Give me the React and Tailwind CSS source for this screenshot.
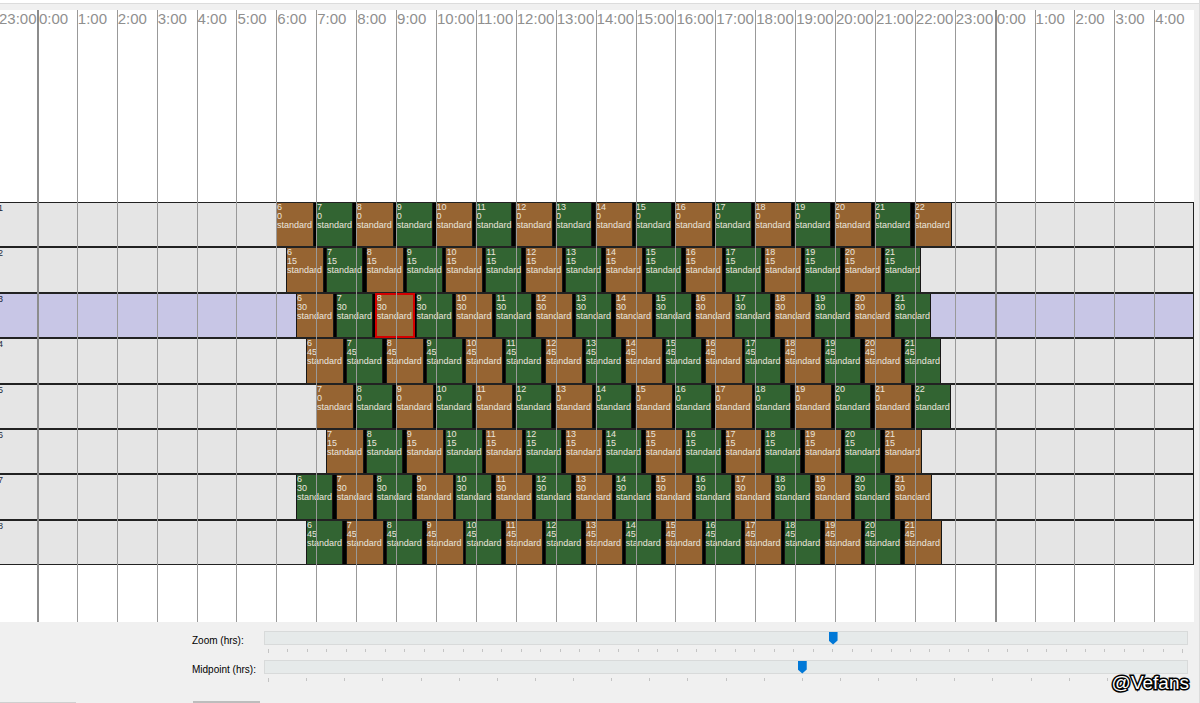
import React from 'react';
import clsx from 'clsx';

// Visible window of the timeline, in hours from midnight
const VIEW_START = -0.925;
const VIEW_END = 29;

const BLOCK_HOURS = { brown: 0.95, green: 0.925 };

const rows = [
  { id: 1, firstHour: 6, minute: 0, count: 17, firstColor: 'brown' },
  { id: 2, firstHour: 6, minute: 15, count: 16, firstColor: 'brown' },
  { id: 3, firstHour: 6, minute: 30, count: 16, firstColor: 'brown' },
  { id: 4, firstHour: 6, minute: 45, count: 16, firstColor: 'brown' },
  { id: 5, firstHour: 7, minute: 0, count: 16, firstColor: 'brown' },
  { id: 6, firstHour: 7, minute: 15, count: 15, firstColor: 'brown' },
  { id: 7, firstHour: 6, minute: 30, count: 16, firstColor: 'green' },
  { id: 8, firstHour: 6, minute: 45, count: 16, firstColor: 'green' },
];

const selected = { row: 3, hour: 8 };

const getColor = (row, index) => {
  const other = row.firstColor === 'brown' ? 'green' : 'brown';
  return index % 2 === 0 ? row.firstColor : other;
};

// Space shared out by hours; scaled up so that a lone part still fills its parent
const span = (hours) => ({ flex: `${hours * 100} 1 0` });

const Block = ({ hour, minute, color, isSelected }) => (
  <div
    className={clsx(
      'h-full min-w-0 whitespace-nowrap border-x border-[#161616] text-[9px] leading-[9px] text-[#ece6de]',
      color === 'brown' ? 'bg-[#966432]' : 'bg-[#326432]',
      isSelected && 'relative z-10 outline-2 -outline-offset-1 outline-[#d40000]'
    )}
    style={span(BLOCK_HOURS[color])}
  >
    <div>{hour}</div>
    <div>{minute}</div>
    <div>standard</div>
  </div>
);

const TimelineRow = ({ row }) => {
  const start = row.firstHour + row.minute / 60;
  const lastColor = getColor(row, row.count - 1);
  const end = start + row.count - 1 + BLOCK_HOURS[lastColor];

  return (
    <div
      className={clsx(
        'flex min-w-0 border-y border-r border-[#222222]',
        row.id === selected.row ? 'bg-[#c8c6e6]' : 'bg-[#e5e5e5]'
      )}
    >
      <div
        className="min-w-0 overflow-hidden pt-px text-[9px] leading-[9px] text-[#1f2a3c]"
        style={span(start - VIEW_START)}
      >
        <span className="-ml-0.5 block">{row.id}</span>
      </div>
      <div className="flex min-w-0 bg-black" style={span(end - start)}>
        {Array.from({ length: row.count }, (_, i) => {
          const color = getColor(row, i);
          const isLast = i === row.count - 1;
          const hour = row.firstHour + i;
          return (
            <div
              key={hour}
              className="flex min-w-0"
              style={span(isLast ? BLOCK_HOURS[color] : 1)}
            >
              <Block
                hour={hour}
                minute={row.minute}
                color={color}
                isSelected={row.id === selected.row && hour === selected.hour}
              />
              {!isLast && <div style={span(1 - BLOCK_HOURS[color])} />}
            </div>
          );
        })}
      </div>
      <div className="min-w-0" style={span(VIEW_END - end)} />
    </div>
  );
};

// Hour lines run over the rows and their blocks
const HourLines = () => {
  const hours = Array.from({ length: 29 }, (_, i) => i);

  return (
    <div className="pointer-events-none absolute inset-0 z-20 flex whitespace-nowrap text-[15px] leading-4 text-[#8f8f8f]">
      <div className="min-w-0 pt-px" style={span(-VIEW_START)}>
        <span className="-ml-px block">23:00</span>
      </div>
      {hours.map((hour) => (
        <div key={hour} className="min-w-0" style={span(1)}>
          <div
            className={clsx(
              'h-full pt-px',
              hour % 24 === 0 ? 'border-l-2 border-[#8c8c8c]' : 'border-l border-[#999999]'
            )}
          >
            {hour % 24}:00
          </div>
        </div>
      ))}
    </div>
  );
};

const SliderRow = ({ id, label, min, max, value }) => (
  <div className="flex h-[29px]">
    <label htmlFor={id} className="w-[72px] shrink-0 text-[10px] leading-5 text-black">
      {label}
    </label>
    <div className="min-w-0 flex-1">
      <input
        id={id}
        type="range"
        min={min}
        max={max}
        defaultValue={value}
        className="block h-3.5 w-full appearance-none bg-[#e6eaea] ring-1 ring-[#d8dada] ring-inset [&::-webkit-slider-thumb]:h-[13px] [&::-webkit-slider-thumb]:w-[9px] [&::-webkit-slider-thumb]:appearance-none [&::-webkit-slider-thumb]:bg-[#0078d7] [&::-webkit-slider-thumb]:[clip-path:polygon(0_0,100%_0,100%_70%,50%_100%,0_70%)]"
      />
      <div className="mt-1 flex justify-between px-1">
        {Array.from({ length: max - min + 1 }, (_, i) => (
          <span
            key={i}
            className={clsx('w-px bg-[#c4c4c4]', i === 0 || i === max - min ? 'h-1' : 'h-[3px]')}
          />
        ))}
      </div>
    </div>
  </div>
);

const App = () => (
  <div className="relative min-h-screen overflow-hidden border-r border-[#dcdcdc] bg-[#f0f0f0] font-['Liberation_Sans',Arial,sans-serif]">
    <div className="h-[3px] bg-white" />
    <div className="h-[7px] border-t border-[#dcdcdc]" />

    {/* Timeline */}
    <main className="relative mr-[5px] overflow-hidden bg-white pt-48 pb-[57px]">
      <HourLines />
      <div className="grid h-[363px] grid-rows-8">
        {rows.map((row) => (
          <TimelineRow key={row.id} row={row} />
        ))}
      </div>
    </main>

    {/* View controls */}
    <div className="pt-[9px] pr-[11px] pl-48">
      <SliderRow id="zoom" label="Zoom (hrs):" min={1} max={48} value={30} />
      <SliderRow id="midpoint" label="Midpoint (hrs):" min={0} max={24} value={14} />
    </div>

    {/* Top edges of the buttons below */}
    <div className="mt-3 flex h-0.5 items-end">
      <div className="mr-[117px] h-px w-[76px] bg-[#cfcfcf]" />
      <div className="h-0.5 w-[67px] bg-[#bdbdbd]" />
    </div>

    <span className="absolute right-2.5 bottom-2.5 text-[19px] leading-5 text-white [-webkit-text-stroke:3px_black] [paint-order:stroke]">
      @Vefans
    </span>
  </div>
);

export default App;
